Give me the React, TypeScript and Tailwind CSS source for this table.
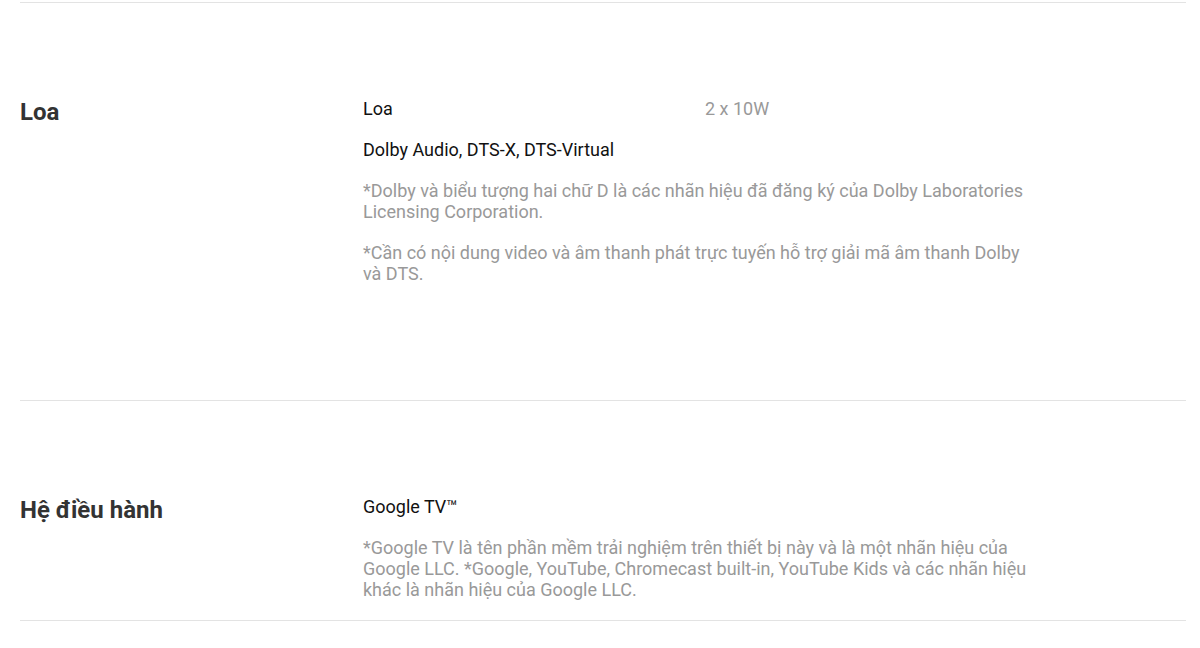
export default function App() {
  return (
    <div className="min-h-[648px] bg-white pt-[2px] font-['Roboto',sans-serif]">
      <div className="ml-5 w-[1166px]">
        <section className="flex border-t border-[#e3e3e3] pt-[95px] pb-[116px]">
          <h2 className="w-[343px] shrink-0 pt-[2px] text-[24px] leading-[24px] font-bold text-[#333]">
            Loa
          </h2>
          <div className="flex w-[665px] flex-col gap-5 text-[18px] leading-[21px]">
            <div className="grid grid-cols-[342px_1fr]">
              <span className="text-[#111]">Loa</span>
              <span className="text-[#999]">2 x 10W</span>
            </div>
            <p className="text-[#111]">Dolby Audio, DTS-X, DTS-Virtual</p>
            <p className="text-[#999]">
              *Dolby và biểu tượng hai chữ D là các nhãn hiệu đã đăng ký của Dolby Laboratories Licensing Corporation.
            </p>
            <p className="text-[#999]">
              *Cần có nội dung video và âm thanh phát trực tuyến hỗ trợ giải mã âm thanh Dolby và DTS.
            </p>
          </div>
        </section>

        <section className="flex border-t border-[#e3e3e3] pt-[95px] pb-[20px]">
          <h2 className="w-[343px] shrink-0 pt-[2px] text-[24px] leading-[24px] font-bold text-[#333]">
            Hệ điều hành
          </h2>
          <div className="flex w-[665px] flex-col gap-5 text-[18px] leading-[21px]">
            <p className="text-[#111]">Google TV™</p>
            <p className="text-[#999]">
              *Google TV là tên phần mềm trải nghiệm trên thiết bị này và là một nhãn hiệu của Google LLC. *Google, YouTube, Chromecast built-in, YouTube Kids và các nhãn hiệu khác là nhãn hiệu của Google LLC.
            </p>
          </div>
        </section>
        <div className="border-t border-[#e3e3e3]" />
      </div>
    </div>
  )
}
